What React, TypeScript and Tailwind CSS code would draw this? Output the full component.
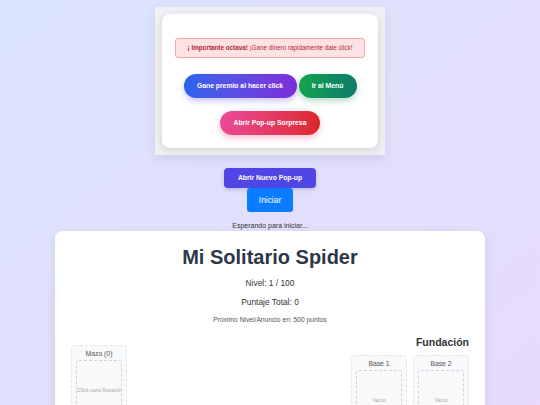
export default function App() {
  return (
    <div className="flex min-h-screen flex-col items-center bg-gradient-to-br from-[#dae4fe] to-[#e8dafb] pt-[7px] font-['Liberation_Sans',Arial,sans-serif]">
      {/* anuncio */}
      <div className="w-[230px] bg-[#eff0f3] p-[7px] shadow-[0_4px_10px_rgba(0,0,0,0.08)]">
        <div className="rounded-lg bg-white px-[13px] pb-[13px] pt-[24px] shadow-[0_2px_8px_rgba(0,0,0,0.12)]">
          <div className="flex h-[20px] items-center justify-center rounded-[3px] border border-[#f5a3a8] bg-[#fde2e4] text-[6.3px] text-[#b3262f]">
            <span className="font-bold">¡ Importante octava!</span>
            <span>&nbsp;¡Gane dinero rapidamente dale click!</span>
          </div>
          <div className="mt-[16px] flex justify-center gap-[2px]">
            <button className="h-[24px] w-[113px] rounded-full bg-gradient-to-r from-[#2563eb] to-[#7c2bd9] text-[6.8px] font-bold text-white shadow-[0_3px_6px_rgba(76,60,220,0.3)]">
              Gane premio al hacer click
            </button>
            <button className="h-[24px] w-[58px] rounded-full bg-gradient-to-r from-[#16a34a] to-[#117a6c] text-[6.8px] font-bold text-white shadow-[0_3px_6px_rgba(20,140,90,0.3)]">
              Ir al Menú
            </button>
          </div>
          <div className="mt-[13px] flex justify-center">
            <button className="h-[24px] w-[100px] rounded-full bg-gradient-to-r from-[#ec4899] to-[#dc2626] text-[6.8px] font-bold text-white shadow-[0_3px_6px_rgba(225,50,90,0.3)]">
              Abrir Pop-up Sorpresa
            </button>
          </div>
        </div>
      </div>

      <button className="mt-[13px] h-[20px] w-[92px] rounded-[4px] bg-[#4f46e5] text-[6.8px] font-bold text-white shadow-[0_2px_4px_rgba(0,0,0,0.15)]">
        Abrir Nuevo Pop-up
      </button>
      <button className="h-[24px] w-[46px] rounded-[3px] bg-[#0a7cff] text-[8.4px] text-white">Iniciar</button>
      <p className="mt-[10px] text-[7px] leading-[8px] text-[#333]">Esperando para iniciar...</p>

      {/* juego */}
      <div className="mt-[1px] w-[430px] rounded-lg bg-white px-[16px] pb-[16px] pt-[14px] text-center shadow-[0_4px_12px_rgba(0,0,0,0.08)]">
        <h1 className="text-[20px] font-bold leading-[24px] text-[#2d3748]">Mi Solitario Spider</h1>
        <p className="mt-[8px] text-[8.4px] leading-[12px] text-[#333]">Nivel: 1 / 100</p>
        <p className="mt-[7px] text-[8.4px] leading-[12px] text-[#333]">Puntaje Total: 0</p>
        <p className="mt-[7px] text-[6.7px] leading-[10px] text-[#555]">Próximo Nivel/Anuncio en: 500 puntos</p>

        <div className="mt-[10px] flex items-start justify-between">
          <div className="mt-[10px]">
            <Slot label="Mazo (0)" text="Click para Repartir" />
          </div>
          <div className="flex flex-col items-end">
            <h2 className="text-[10.5px] font-bold leading-[14px] text-[#333]">Fundación</h2>
            <div className="mt-[6px] flex gap-[6px]">
              <Slot label="Base 1" text="Vacío" />
              <Slot label="Base 2" text="Vacío" />
            </div>
          </div>
        </div>
      </div>
    </div>
  );
}

function Slot({ label, text }: { label: string; text: string }) {
  return (
    <div className="w-[56px] rounded-[4px] border border-dashed border-[#e3e6ea] bg-[#f8f9fb] px-[4px] pb-[4px] pt-[4px]">
      <p className="text-[6.8px] leading-[8px] text-[#555]">{label}</p>
      <div className="mt-[2px] flex h-[62px] items-center justify-center rounded-[3px] border border-dashed border-[#cfd4da] bg-[#f8f9fb]">
        <span className="text-[5.3px] text-[#aaa]">{text}</span>
      </div>
    </div>
  );
}
